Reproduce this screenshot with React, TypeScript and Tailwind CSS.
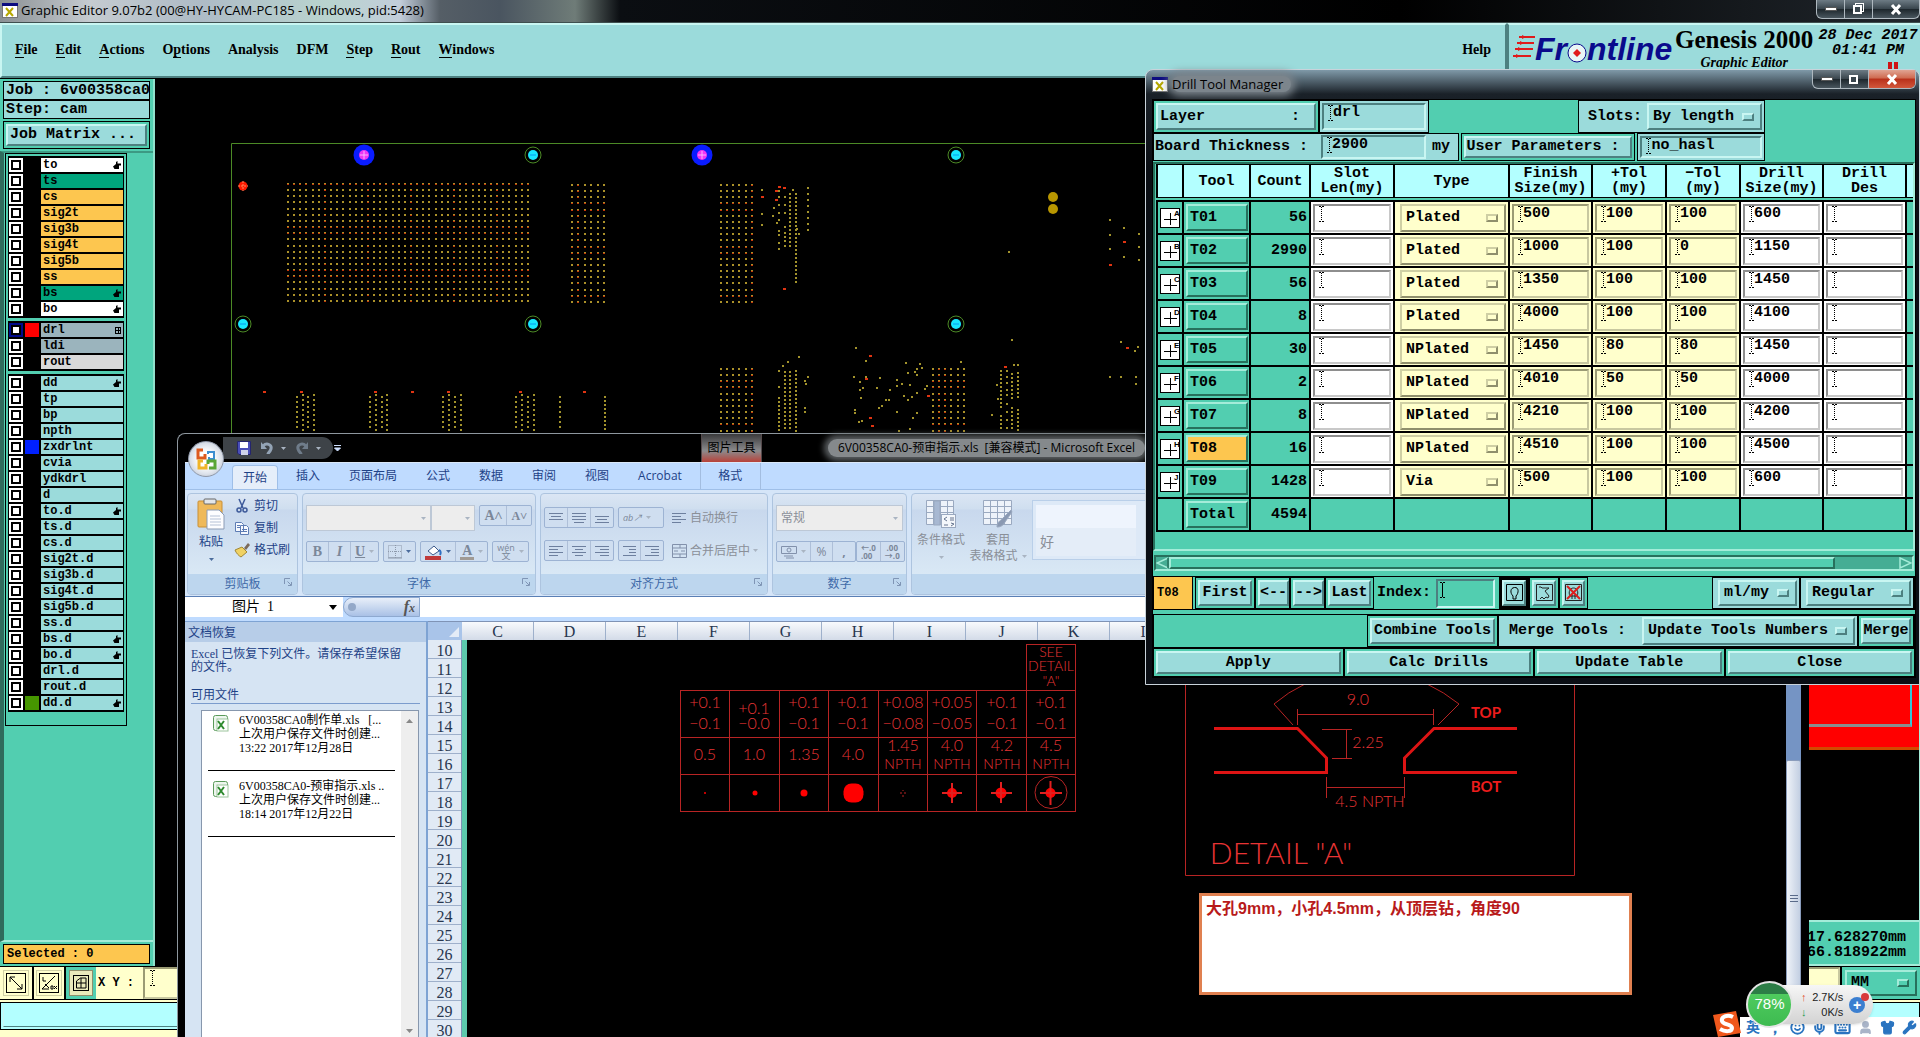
import { Fragment, ReactNode } from "react";
import clsx from "clsx";
import { Keyboard, Mic, Shirt, Smile, User, Wrench } from "lucide-react";

const mono = "font-['Liberation_Mono',monospace] font-bold text-black";
const cjk = "font-['Open_Sans','Noto_Sans_CJK_SC',sans-serif]";
const song = "font-['Liberation_Serif','Noto_Sans_CJK_SC',serif]";

const raised =
  "border-2 border-t-[#c9f6f2] border-l-[#c9f6f2] border-b-[#4d8080] border-r-[#4d8080]";
const sunken =
  "border-2 border-t-[#4d8080] border-l-[#4d8080] border-b-[#c9f6f2] border-r-[#c9f6f2]";
const raisedGreen =
  "border-2 border-t-[#a4ecd9] border-l-[#a4ecd9] border-b-[#27705c] border-r-[#27705c]";
const raisedCream =
  "border-2 border-t-[#cfcfa4] border-l-[#cfcfa4] border-b-[#8f8f6c] border-r-[#8f8f6c]";
const sunkenCream =
  "border-2 border-t-[#9b9b74] border-l-[#9b9b74] border-b-[#c8c8a0] border-r-[#c8c8a0]";
const sunkenWhite =
  "border-2 border-t-[#8e8e8e] border-l-[#8e8e8e] border-b-[#c8c8c8] border-r-[#c8c8c8]";

type Layer = { name: string; bg: string; swatch?: string; hand?: boolean; on?: boolean };

const pale = "bg-[#9bdbdb]";
const amber = "bg-[#fdc64f]";

const layerGroups: Layer[][] = [
  [
    { name: "to", bg: "bg-white", hand: true },
    { name: "ts", bg: "bg-[#00a57d]" },
    { name: "cs", bg: amber },
    { name: "sig2t", bg: amber },
    { name: "sig3b", bg: amber },
    { name: "sig4t", bg: amber },
    { name: "sig5b", bg: amber },
    { name: "ss", bg: amber },
    { name: "bs", bg: "bg-[#00a57d]", hand: true },
    { name: "bo", bg: "bg-white", hand: true },
  ],
  [
    { name: "drl", bg: "bg-[#9bb4bd]", swatch: "bg-[#ff0000]", on: true },
    { name: "ldi", bg: "bg-[#9bb4bd]" },
    { name: "rout", bg: "bg-[#d9d9d9]" },
  ],
  [
    { name: "dd", bg: pale, hand: true },
    { name: "tp", bg: pale },
    { name: "bp", bg: pale },
    { name: "npth", bg: pale },
    { name: "zxdrlnt", bg: pale, swatch: "bg-[#0020ff]" },
    { name: "cvia", bg: pale },
    { name: "ydkdrl", bg: pale },
    { name: "d", bg: pale },
    { name: "to.d", bg: pale, hand: true },
    { name: "ts.d", bg: pale },
    { name: "cs.d", bg: pale },
    { name: "sig2t.d", bg: pale },
    { name: "sig3b.d", bg: pale },
    { name: "sig4t.d", bg: pale },
    { name: "sig5b.d", bg: pale },
    { name: "ss.d", bg: pale },
    { name: "bs.d", bg: pale, hand: true },
    { name: "bo.d", bg: pale, hand: true },
    { name: "drl.d", bg: pale },
    { name: "rout.d", bg: pale },
    { name: "dd.d", bg: pale, swatch: "bg-[#469600]", hand: true },
  ],
];

// tool, count, type, finish size, +tol, -tol, drill size
const tools = [
  ["T01", "56", "Plated", "500", "100", "100", "600"],
  ["T02", "2990", "Plated", "1000", "100", "0", "1150"],
  ["T03", "56", "Plated", "1350", "100", "100", "1450"],
  ["T04", "8", "Plated", "4000", "100", "100", "4100"],
  ["T05", "30", "NPlated", "1450", "80", "80", "1450"],
  ["T06", "2", "NPlated", "4010", "50", "50", "4000"],
  ["T07", "8", "NPlated", "4210", "100", "100", "4200"],
  ["T08", "16", "NPlated", "4510", "100", "100", "4500"],
  ["T09", "1428", "Via", "500", "100", "100", "600"],
];

const menus: [string, number][] = [
  ["File", 0],
  ["Edit", 0],
  ["Actions", 0],
  ["Options", 1],
  ["Analysis", -1],
  ["DFM", -1],
  ["Step", 0],
  ["Rout", 0],
  ["Windows", 0],
];

/* ---------- shared bits ---------- */

const IBeam = ({ solid }: { solid?: boolean }) => (
  <svg width="5" height="16" className="shrink-0" shapeRendering="crispEdges">
    <path d="M0 0.5h2M3 0.5h2M0 15.5h2M3 15.5h2" stroke="#000" />
    <path d="M2.5 1V15" stroke="#000" strokeDasharray={solid ? undefined : "1 1"} />
  </svg>
);

type FieldProps = { label: string; value?: string; bevel: string; className?: string };

const Field = ({ label, value = "", bevel, className }: FieldProps) => (
  <div className={clsx("flex items-start overflow-hidden pl-1", bevel, className)}>
    <IBeam />
    <input
      aria-label={label}
      defaultValue={value}
      className="h-4 w-full min-w-0 bg-transparent text-[15px] leading-4 outline-none"
    />
  </div>
);

type PickerProps = { label: string; value: string; tone: string; mark?: string; className?: string };

const Picker = ({ label, value, tone, mark = raised, className }: PickerProps) => (
  <div className={clsx("relative flex items-center", tone, className)}>
    <select
      aria-label={label}
      className="h-full w-full appearance-none bg-transparent pl-1 text-[15px] leading-4 outline-none"
    >
      <option>{value}</option>
    </select>
    <span className={clsx("pointer-events-none absolute right-[6px] h-2 w-3", mark)} />
  </div>
);

const Button = ({ children, className }: { children: ReactNode; className?: string }) => (
  <button className={clsx("bg-[#9bdbdb] text-[15px] leading-4 whitespace-nowrap", raised, className)}>
    {children}
  </button>
);

const XIcon = () => (
  <svg width="16" height="15" viewBox="0 0 16 15" className="shrink-0">
    <rect x="0.5" y="0.5" width="15" height="14" fill="#fff" stroke="#777" />
    <rect width="16" height="3" fill="#0c0c80" />
    <path d="M4 5l7 8M11 5l-7 8" stroke="#b7a800" strokeWidth="2" />
  </svg>
);

const WindowButtons = ({ active }: { active?: boolean }) => (
  <div className="flex h-[19px] overflow-hidden rounded-b-md border border-t-0 border-[#aeb8bf] bg-[linear-gradient(#6d7b84,#38444c_50%,#1d262c_51%,#49565e)]">
    <button aria-label="Minimize" className="flex w-7 items-center justify-center border-r border-[#aeb8bf]">
      <svg width="12" height="6">
        <rect x="0.5" y="1.5" width="11" height="3" fill="#fff" stroke="#555" />
      </svg>
    </button>
    <button aria-label="Restore" className="flex w-7 items-center justify-center border-r border-[#aeb8bf]">
      <svg width="13" height="12">
        {!active && <rect x="3.5" y="0.5" width="8" height="8" fill="none" stroke="#fff" />}
        <rect x="2" y="3" width="7" height="7" fill="#3a464e" stroke="#fff" strokeWidth="2" />
      </svg>
    </button>
    <button
      aria-label="Close"
      className={clsx(
        "flex w-[46px] items-center justify-center",
        active && "bg-[linear-gradient(#e0a493,#cf6a50_45%,#b8301a_50%,#d2573b)]"
      )}
    >
      <svg width="12" height="11" viewBox="0 0 12 11">
        <path d="M2 1l8 9M10 1l-8 9" stroke="#fff" strokeWidth="3" />
      </svg>
    </button>
  </div>
);

/* ---------- Graphic Editor ---------- */

const Hand = () => (
  <svg width="8" height="8" viewBox="0 0 8 8">
    <path d="M3 1L4.500 0v2.500H8V4.500H6V8H1.500L0 5.500 3 3z" fill="#000" />
  </svg>
);

const LayerRow = ({ layer }: { layer: Layer }) => (
  <div className="flex h-4 gap-[2px] py-px">
    <label className={clsx("flex w-[14px] items-center justify-center", layer.on ? "bg-[#000a8c]" : "bg-white")}>
      <input
        type="checkbox"
        aria-label={layer.name}
        className="size-[10px] appearance-none border-2 border-black bg-white"
      />
    </label>
    <span className={clsx("w-[14px]", layer.swatch ?? "bg-black")} />
    <span className={clsx("flex flex-1 items-center justify-between px-[2px] text-xs leading-3", layer.bg)}>
      {layer.name}
      {layer.hand && <Hand />}
      {layer.on && (
        <svg width="6" height="7" shapeRendering="crispEdges">
          <path d="M0.5 0.5h5v6h-5zM0 3.5h6M3 0v7" fill="none" stroke="#000" />
        </svg>
      )}
    </span>
  </div>
);

const Sidebar = () => (
  <aside className={clsx("flex w-[155px] shrink-0 flex-col border-r-2 border-[#8fe0cb] bg-[#52ceb0]", mono)}>
    <div className="px-[3px] pt-[2px] text-[15px]">
      <div className="h-[19px] overflow-hidden border border-black bg-[#9bdbdb] pl-[2px] leading-[18px] whitespace-pre">
        Job : 6v00358ca0
      </div>
      <div className="h-[19px] border border-black bg-[#9bdbdb] pl-[2px] leading-[18px]">Step: cam</div>
      <div className="mt-[2px] flex h-[28px] border border-black p-[2px]">
        <Button className="flex-1 pl-[2px] text-left">Job Matrix ...</Button>
      </div>
    </div>
    <div className="mt-[2px] flex-1 border-t-2 border-l-4 border-t-[#3c9a83] border-l-[#2f6b5c] border-b-2 border-b-[#a4ecd9]">
      <div className="ml-px w-[122px] border border-black pt-[2px] pb-[10px]">
        {layerGroups.map((group, i) => (
          <div key={i} className="mx-[2px] mb-[3px] border border-black bg-black">
            {group.map((layer) => (
              <LayerRow key={layer.name} layer={layer} />
            ))}
          </div>
        ))}
      </div>
    </div>
    <div className="mx-[3px] my-[2px] h-5 border border-black bg-[#fdc64f] pl-[3px] text-xs leading-[18px]">
      Selected : 0
    </div>
  </aside>
);

type GridProps = { x: number; y: number; cols: number; rows: number; dx?: number; hot?: number[]; hotCols?: number[] };

const HoleGrid = ({ x, y, cols, rows, dx = 6.15, hot = [], hotCols = [] }: GridProps) => (
  <>
    {Array.from({ length: cols * rows }, (_, i) => {
      const c = i % cols;
      const r = Math.floor(i / cols);
      const red = hot.includes(r) || hotCols.includes(c);
      const px = Math.round(x + c * dx);
      const py = Math.round(y + r * 6.15);
      return (
        <Fragment key={i}>
          <rect x={px} y={py} width="2" height="2" fill="#ab9129" />
          {red && <rect x={px} y={py + 1} width="2" height="1" fill="#c4380a" />}
        </Fragment>
      );
    })}
  </>
);

// vertical runs of vias: x, first y, last y, step
const runs = [
  [808, 188, 230, 6], [790, 194, 246, 4], [796, 194, 283, 4],
  [785, 372, 430, 4], [790, 372, 430, 4], [796, 371, 431, 4], [779, 398, 430, 4],
  [1001, 371, 408, 4], [1001, 416, 430, 4], [1012, 374, 400, 4], [1012, 408, 430, 4],
  [1018, 373, 400, 4], [1018, 410, 431, 4],
  [297, 397, 431, 5], [303, 395, 431, 5], [308, 397, 431, 5], [314, 395, 431, 5],
  [370, 397, 431, 5], [376, 395, 431, 5], [382, 397, 431, 5], [387, 395, 431, 5],
  [443, 397, 431, 5], [449, 395, 431, 5], [455, 397, 431, 5], [461, 395, 431, 5],
  [516, 397, 431, 5], [522, 395, 431, 5], [528, 397, 431, 5], [534, 395, 431, 5],
  [560, 397, 431, 5], [605, 397, 431, 4],
];

const vias = [
  [762, 190], [762, 214], [762, 225], [793, 190], [774, 208], [773, 216], [777, 223],
  [779, 191], [779, 197], [779, 205], [779, 213], [779, 220], [779, 231], [779, 235], [779, 243], [779, 249],
  [785, 197], [785, 205], [785, 213], [785, 227], [785, 233], [785, 237], [785, 241], [785, 246],
  [797, 229], [799, 234], [1009, 252], [1110, 220], [1110, 235], [1110, 249], [1124, 228], [1124, 257],
  [1139, 234], [1139, 247], [1139, 260], [856, 348], [866, 361], [799, 357], [788, 362], [783, 366],
  [779, 371], [779, 387], [808, 377], [805, 381], [806, 384], [805, 408], [805, 412],
  [906, 363], [920, 364], [922, 368], [917, 369], [915, 372], [908, 373], [917, 375], [854, 377],
  [866, 377], [880, 378], [897, 380], [860, 382], [902, 384], [910, 385], [897, 386], [927, 386],
  [925, 389], [863, 388], [877, 388], [860, 390], [890, 390], [917, 393], [904, 396], [912, 397],
  [861, 398], [908, 400], [886, 400], [889, 400], [882, 406], [879, 408], [855, 410], [855, 413],
  [917, 413], [897, 412], [913, 418], [862, 421], [859, 422], [910, 429], [899, 431], [961, 362],
  [1012, 340], [1014, 365], [1018, 365], [1007, 371], [1007, 377], [1007, 383], [1007, 390],
  [1007, 395], [1007, 404], [1007, 412], [1007, 420], [1007, 428], [997, 385], [998, 399], [992, 415],
  [1121, 342], [1138, 347], [1135, 351], [1110, 377], [1121, 377], [1136, 377], [1136, 384],
];

const hotVias = [
  [762, 197], [779, 187], [784, 188], [776, 191], [776, 200], [784, 289], [1110, 265], [1124, 242],
  [870, 356], [866, 379], [928, 396], [870, 418], [872, 426], [1005, 367], [1127, 348],
  [264, 392], [301, 392], [375, 392], [412, 392], [448, 392], [520, 392], [584, 392],
];

const Board = () => (
  <svg className="absolute inset-0 h-full w-full" aria-label="Board view">
    {/* everything below is in screen units, the group brings it under the menu bar */}
    <g transform="translate(-155 -79)">
      <path d="M231.5 966V143.5H1200" fill="none" stroke="#4c8a26" />
      <g shapeRendering="crispEdges">
        <HoleGrid x={287} y={183} cols={40} rows={20} hot={[0, 7, 8, 14, 15]} hotCols={[6, 13, 20, 27, 34]} />
        <HoleGrid x={571} y={184} cols={6} rows={20} hot={[3, 4, 10, 11, 18]} hotCols={[1]} dx={6.4} />
        <HoleGrid x={720} y={184} cols={6} rows={20} hot={[3, 4, 10, 11, 18]} hotCols={[5]} />
        <HoleGrid x={720} y={368} cols={6} rows={11} hot={[2, 3, 9]} hotCols={[5]} />
        <HoleGrid x={932} y={368} cols={6} rows={11} hot={[2, 3, 9]} hotCols={[1, 2]} />
        {runs.map(([x, from, to, step]) =>
          Array.from({ length: Math.floor((to - from) / step) + 1 }, (_, i) => (
            <rect key={`${x}-${from}-${i}`} x={x - 1} y={from + i * step - 1} width="2" height="2" fill="#a3932c" />
          ))
        )}
        {vias.map(([x, y]) => (
          <rect key={`${x}-${y}`} x={x - 1} y={y - 1} width="2" height="2" fill="#a3932c" />
        ))}
        {hotVias.map(([x, y]) => (
          <rect key={`${x}-${y}`} x={x - 1} y={y - 1} width="3" height="2" fill="#e03412" />
        ))}
      </g>
      {[364, 702].map((x) => (
        <g key={x}>
          <circle cx={x} cy="155" r="10.5" fill="#0a1cff" />
          <circle cx={x} cy="155" r="5" fill="#ee35f5" />
          <path d={`M${x - 4} 155h8M${x} 151v8`} stroke="#fbb0ff" />
        </g>
      ))}
      {[[533, 155], [956, 155], [243, 324], [533, 324], [956, 324]].map(([x, y]) => (
        <g key={`${x}-${y}`}>
          <circle cx={x} cy={y} r="8" fill="none" stroke="#4c8a26" />
          <circle cx={x} cy={y} r="5" fill="#19e6ff" />
          <path d={`M${x - 3} ${y}h6`} stroke="#0a9af0" />
        </g>
      ))}
      <circle cx="243" cy="186" r="4.5" fill="#ff1a00" />
      <path d="M238 186h10M243 181v10" stroke="#ff8b5e" strokeDasharray="2 1" />
      <circle cx="1053" cy="197" r="5" fill="#b89600" />
      <circle cx="1053" cy="209" r="5" fill="#b89600" />
    </g>
  </svg>
);

const Brand = () => (
  <div className="flex w-[413px] shrink-0 border-2 border-t-[#c9f6f2] border-l-[#4d8080] border-r-0 border-b-[#4d8080] bg-[#9bdbdb] pt-[3px]">
    <div className="flex h-[42px] items-center pl-1">
      <svg width="22" height="26" viewBox="0 0 22 26" className="mb-1">
        <path d="M6 3h16M4 9h17M2 15h18M0 22h18" stroke="#e01b1b" strokeWidth="2" />
        <path d="M9 1l4 2-4 2zM7 7l4 2-4 2zM5 13l4 2-4 2zM3 20l4 2-4 2z" fill="#e01b1b" />
      </svg>
      <span className="flex items-center font-['Liberation_Sans',sans-serif] text-[32px] leading-8 font-bold text-[#0a0a8c] italic">
        Fr
        <svg width="20" height="20" viewBox="0 0 20 20" className="mt-2">
          <circle cx="10" cy="10" r="9" fill="#e9f6f6" stroke="#0a0a8c" />
          <path d="M10 6l4 4-4 4-4-4z" fill="#e01b1b" />
        </svg>
        ntline
      </span>
    </div>
    <div className="flex-1 text-center font-['Liberation_Serif',serif] whitespace-nowrap">
      <div className="text-[25px] leading-6 font-bold">Genesis 2000</div>
      <div className="mt-[3px] text-sm leading-4 font-bold italic">Graphic Editor</div>
    </div>
    <div className="w-[104px] text-center font-['Liberation_Mono',monospace] text-[15px] leading-[15px] font-bold whitespace-nowrap italic">
      28 Dec 2017
      <br />
      01:41 PM
      <div className="ml-[72px] flex gap-[2px] pt-1">
        <span className="h-3 w-1 bg-[#d01414]" />
        <span className="h-3 w-1 bg-[#d01414]" />
      </div>
    </div>
  </div>
);

const GraphicEditor = () => (
  <section className="flex h-full flex-col">
    <header className="flex h-[22px] items-start justify-between bg-[linear-gradient(90deg,#8b9094_0,#c5cbd0_90px,#aebbc6_200px,#b9d4cf_330px,#c2cdda_400px,#555e66_440px,#4a5560_500px,#6f7c78_575px,#0b0e12_620px,#000_1400px,#20262c_100%)] pl-[2px]">
      <h1 className={clsx("flex items-center gap-[3px] pt-[2px] text-[13px] leading-4 whitespace-nowrap", cjk)}>
        <XIcon />
        Graphic Editor 9.07b2 (00@HY-HYCAM-PC185 - Windows, pid:5428)
      </h1>
      <WindowButtons />
    </header>
    <div className="flex h-[57px] shrink-0 border-t border-b border-t-[#3f4f4f] border-b-black bg-[#9bdbdb]">
      <nav
        className={clsx(
          "flex flex-1 items-center gap-[18px] pb-[2px] pl-[13px] font-['Liberation_Serif',serif] text-sm font-bold",
          raised
        )}
      >
        {menus.map(([name, hot]) => (
          <button key={name}>
            {name.split("").map((ch, i) => (
              <span key={i} className={clsx(i === hot && "border-b border-black")}>
                {ch}
              </span>
            ))}
          </button>
        ))}
        <button className="mr-[14px] ml-auto">Help</button>
      </nav>
      <Brand />
    </div>
    <div className="flex min-h-0 flex-1">
      <Sidebar />
      <main className="relative flex-1 bg-black">
        <Board />
      </main>
      <aside className={clsx("flex w-[130px] flex-col justify-end border-r border-[#a4ecd9] bg-black text-[15px]", mono)}>
        <div className="mb-[170px] h-[120px] border-b-[3px] border-[#d24a00] bg-[#ff0000]">
          <div className="mr-[7px] h-[97px] border-r-2 border-b-[3px] border-r-[#35c8d8] border-b-[#8a8f8f]" />
        </div>
        <div className="h-[46px] border-t-2 border-b-2 border-[#a4ecd9] bg-[#52ceb0] pt-2 pr-[13px] text-right leading-[15px]">
          <div>17.628270mm</div>
          <div>66.818922mm</div>
        </div>
      </aside>
    </div>
    <footer className={clsx("flex h-[71px] shrink-0 flex-col bg-[#ffffcc]", mono)}>
      <div className="flex h-[34px] border-b border-t border-black text-sm">
        <button aria-label="Zoom" className="flex w-[34px] items-center justify-center border-r-2 border-black">
          <svg width="26" height="26" fill="none" stroke="#000">
            <rect x="0.5" y="0.5" width="25" height="25" stroke="#cfcfa4" />
            <rect x="3.5" y="3.5" width="19" height="19" />
            <path d="M7 7l12 12M7 12V7h5M19 14v5h-5" />
          </svg>
        </button>
        <button aria-label="Angle" className="flex w-8 items-center justify-center border-r-2 border-black">
          <svg width="26" height="26" fill="none" stroke="#000">
            <rect x="0.5" y="0.5" width="25" height="25" stroke="#cfcfa4" />
            <rect x="3.5" y="3.5" width="19" height="19" />
            <path d="M19 6L6 19h7M7 7v4h3M15 16h2v3h-2zM18 16l3 3M21 16l-3 3M9 14l4 4" />
          </svg>
        </button>
        <button aria-label="Grid" className="flex w-[29px] items-center justify-center bg-[#52ceb0]">
          <svg width="24" height="26" fill="none" stroke="#000">
            <rect width="24" height="26" fill="#e9e9bb" stroke="#8f8f6c" strokeWidth="2" />
            <rect x="4.5" y="5.5" width="15" height="15" />
            <path d="M7.5 18V11l4-3h5.500v10zM12 8v10M7 13h10" />
          </svg>
        </button>
        <label className="flex flex-1 items-center gap-[9px] border-l border-[#52ceb0] pl-[2px] text-xs">
          <span className="whitespace-pre">X Y :</span>
          <span className={clsx("flex h-full flex-1 items-start pt-px pl-[5px]", sunkenCream)}>
            <IBeam />
            <input className="w-full bg-transparent outline-none" />
          </span>
        </label>
        <div className="flex w-[80px] border-l-2 border-black bg-[#52ceb0] p-[3px]">
          <Picker label="Units" value="MM" tone={raisedGreen} mark={raisedGreen} className="flex-1" />
        </div>
      </div>
      <div className="mt-[2px] h-[28px] border border-black bg-[#b3ffff] p-[2px]">
        <div className="h-full border-b border-l border-b-[#4d8080] border-l-[#c9f6f2]" />
      </div>
    </footer>
  </section>
);

/* ---------- Excel ---------- */

const Caret = ({ dim }: { dim?: boolean }) => (
  <svg width="5" height="3" className="shrink-0">
    <path d="M0 0h5L2.500 3z" fill={dim ? "#a9b4c2" : "#4a6b9c"} />
  </svg>
);

const Lines = ({ rows }: { rows: [number, number][] }) => (
  <svg width="14" height="12" stroke="#6d7f9e" strokeWidth="1">
    {rows.map(([a, b], i) => (
      <path key={i} d={`M${a} ${i * 3 + 1.5}H${b}`} />
    ))}
  </svg>
);

const Cluster = ({ items }: { items: ReactNode[] }) => (
  <div className="flex h-[21px] divide-x divide-[#aebfd8] rounded-xs border border-[#9db3d3] bg-[#cfdef0] text-[#7b8799]">
    {items.map((item, i) => (
      <button key={i} className="flex min-w-[22px] items-center justify-center gap-1 px-1">
        {item}
      </button>
    ))}
  </div>
);

type GroupProps = { title?: string; className: string; children: ReactNode };

const Group = ({ title, className, children }: GroupProps) => (
  <div
    className={clsx(
      "flex h-[102px] shrink-0 flex-col overflow-hidden rounded-sm border border-[#adc4df] bg-[linear-gradient(#dbe6f4_0,#cfdeef_15px,#c8d8ed_16px,#d9e8f5_80px)]",
      className
    )}
  >
    <div className="flex-1">{children}</div>
    <div className="relative h-5 bg-[#bdd6ee] text-center text-[#3f6aa8] leading-5">
      {title}
      {title && (
        <svg width="8" height="8" className="absolute top-1 right-[5px]" fill="none" stroke="#7f95b5">
          <path d="M0.500 6V0.500H6M3.500 3.500L7 7M7.500 4v3.500H4" />
        </svg>
      )}
    </div>
  </div>
);

const tabs = ["插入", "页面布局", "公式", "数据", "审阅", "视图", "Acrobat"];

const Ribbon = () => (
  <div className="flex h-[107px] shrink-0 gap-[4px] overflow-hidden border-t border-[#9fbfe8] bg-[#d5e5f8] px-[2px] pt-[3px] text-xs text-[#1e4287]">
    <Group title="剪贴板" className="w-[111px]">
      <div className="flex">
        <button className="flex w-[46px] flex-col items-center pt-1 leading-4">
          <svg width="28" height="32" viewBox="0 0 28 32">
            <rect x="1" y="3" width="24" height="26" rx="1" fill="#efb95a" stroke="#c98f35" />
            <rect x="7" y="1" width="12" height="5" rx="1" fill="#e3e6ea" stroke="#666" />
            <path d="M10 12h12l5 5v14H10z" fill="#fdfdff" stroke="#8b9bb5" />
            <path d="M13 18h10M13 21h11M13 24h11M13 27h11" stroke="#b5c1d6" />
          </svg>
          <span className="pt-1 pb-2">粘贴</span>
          <Caret />
        </button>
        <div className="pt-px leading-[22px]">
          <button className="flex items-center gap-1">
            <svg width="16" height="16" viewBox="0 0 16 16" fill="none" stroke="#3d5a9a" strokeWidth="1.500">
              <path d="M5 1l4 9M11 1L7 10" />
              <circle cx="5" cy="12" r="2" />
              <circle cx="11" cy="12" r="2" />
            </svg>
            剪切
          </button>
          <button className="flex items-center gap-1">
            <svg width="16" height="16" viewBox="0 0 16 16" fill="#f6f9ff" stroke="#5d7cb4">
              <path d="M1.500 2.500h6l2 2v7h-8zM6.500 5.500h6l2 2v7h-8z" />
              <path d="M8 9.500h5M8 11.500h5M3 5.500h3M3 7.500h3" />
            </svg>
            复制
          </button>
          <button className="flex items-center gap-1">
            <svg width="16" height="16" viewBox="0 0 16 16">
              <path d="M10 6l4-5 2 2-4 5z" fill="#7b6a5a" />
              <path d="M1 8l7-3 5 5-6 5c-2-1-5-4-6-7z" fill="#f0d264" stroke="#a18735" />
            </svg>
            格式刷
          </button>
        </div>
      </div>
    </Group>
    <Group title="字体" className="w-[234px]">
      <div className="flex flex-col gap-[10px] px-[3px] pt-[11px]">
        <div className="flex">
          <div className="flex h-[26px] w-[131px] items-center justify-end border border-[#bdc8d6] bg-[#ededed] pr-1">
            <Caret dim />
          </div>
          <div className="mr-1 flex h-[26px] w-[47px] items-center justify-end border border-[#bdc8d6] bg-[#ededed] pr-1">
            <Caret dim />
          </div>
          <Cluster
            items={[
              <b className="font-['Liberation_Serif',serif] text-sm">A˄</b>,
              <b className="font-['Liberation_Serif',serif] text-xs">A˅</b>,
            ]}
          />
        </div>
        <div className="flex gap-1">
          <Cluster
            items={[
              <b className="font-['Liberation_Serif',serif] text-sm">B</b>,
              <i className="font-['Liberation_Serif',serif] text-sm font-bold">I</i>,
              <>
                <u className="font-['Liberation_Serif',serif] text-sm font-bold">U</u>
                <Caret dim />
              </>,
            ]}
          />
          <Cluster
            items={[
              <>
                <svg width="14" height="14" fill="none" stroke="#8d99ab" strokeDasharray="1 1">
                  <path d="M0.500 0.500h13v12H0.500zM7.500 0v13M0 6.500h14" />
                  <path d="M0 13h14" strokeDasharray="none" />
                </svg>
                <Caret />
              </>,
            ]}
          />
          <Cluster
            items={[
              <>
                <svg width="17" height="16" viewBox="0 0 17 16">
                  <path d="M3 7l6-5 5 5-6 4z" fill="#fff" stroke="#3d5a8a" />
                  <path d="M14 6c2 1 2 3 1 5" stroke="#2e6fc2" strokeWidth="2" fill="none" />
                  <rect y="12" width="16" height="4" fill="#c0393a" />
                </svg>
                <Caret />
              </>,
              <>
                <b className="border-b-[3px] border-[#a09a94] px-[2px] font-['Liberation_Serif',serif] text-sm leading-[13px]">A</b>
                <Caret dim />
              </>,
            ]}
          />
          <Cluster
            items={[
              <>
                <span className="text-[9px] leading-[8px]">
                  wén
                  <br />文
                </span>
                <Caret dim />
              </>,
            ]}
          />
        </div>
      </div>
    </Group>
    <Group title="对齐方式" className="w-[228px]">
      <div className="flex flex-col gap-[12px] px-[3px] pt-[13px] text-[#8a8f98]">
        <div className="flex">
          <Cluster
            items={[
              <Lines rows={[[0, 14], [2, 12], [0, 14]]} />,
              <Lines rows={[[0, 14], [0, 14], [0, 14], [2, 12]]} />,
              <Lines rows={[[9, 9], [0, 14], [2, 12], [0, 14]]} />,
            ]}
          />
          <div className="ml-1 w-[46px]">
            <Cluster
              items={[
                <>
                  <i className="text-[9px]">ab↗</i>
                  <Caret dim />
                </>,
              ]}
            />
          </div>
          <button className="ml-2 flex items-center gap-1 whitespace-nowrap">
            <Lines rows={[[0, 14], [0, 9], [0, 14], [0, 9]]} />
            自动换行
          </button>
        </div>
        <div className="flex">
          <Cluster
            items={[
              <Lines rows={[[0, 14], [0, 9], [0, 14], [0, 9]]} />,
              <Lines rows={[[0, 14], [3, 11], [0, 14], [3, 11]]} />,
              <Lines rows={[[0, 14], [5, 14], [0, 14], [5, 14]]} />,
            ]}
          />
          <div className="ml-1 w-[46px]">
            <Cluster
              items={[
                <Lines rows={[[0, 14], [6, 14], [6, 14], [0, 14]]} />,
                <Lines rows={[[0, 14], [6, 14], [6, 14], [0, 14]]} />,
              ]}
            />
          </div>
          <button className="ml-2 flex items-center gap-[3px] whitespace-nowrap">
            <svg width="15" height="14" fill="none" stroke="#8291ab">
              <path d="M0.500 0.500h14v13h-14zM0 4h15M0 10h15M8 0v4M8 10v4M2 7h4M9 7h4" />
            </svg>
            合并后居中
            <Caret dim />
          </button>
        </div>
      </div>
    </Group>
    <Group title="数字" className="w-[135px]">
      <div className="flex flex-col gap-[10px] px-[3px] pt-[11px]">
        <div className="flex h-[26px] items-center justify-between border border-[#bdc8d6] bg-[#ededed] px-1 text-[#8a8f98]">
          常规
          <Caret dim />
        </div>
        <div className="flex justify-between">
          <Cluster
            items={[
              <>
                <svg width="16" height="14" fill="none" stroke="#8291ab">
                  <path d="M0.500 1.500h15v7h-15zM3 11h9M5 13h8" />
                  <circle cx="8" cy="5" r="2" />
                </svg>
                <Caret dim />
              </>,
              "%",
              <b>,</b>,
            ]}
          />
          <Cluster
            items={[
              <span className="text-left text-[8px] leading-[8px] font-bold">
                ←.0
                <br />
                .00
              </span>,
              <span className="text-[8px] leading-[8px] font-bold">
                .00
                <br />
                →.0
              </span>,
            ]}
          />
        </div>
      </div>
    </Group>
    <Group className="w-[860px]">
      <div className="flex pt-[6px] text-center text-[#8a8f98]">
        <button className="flex w-[58px] flex-col items-center leading-4">
          <svg width="30" height="28" fill="#eef3fa" stroke="#9aa9c0">
            <path d="M0.500 0.500h27v24h-27zM7.500 0v25M14.500 0v25M21.500 0v25M0 6.500h28M0 12.500h28M0 18.500h28" />
            <rect x="8" y="1" width="6" height="24" fill="#a7b8d2" />
            <rect x="15.500" y="14.500" width="14" height="13" fill="#f4f7fb" />
            <path d="M21 17l-3 2 3 2M24 18h4M24 20h4M18 25h4M25 23l3 1-3 2" fill="none" stroke="#66758f" />
          </svg>
          <span className="pt-1 pb-2">条件格式</span>
          <Caret dim />
        </button>
        <button className="flex w-[56px] flex-col items-center leading-4">
          <svg width="30" height="28" fill="#eef3fa" stroke="#9aa9c0">
            <path d="M0.500 0.500h28v24h-28zM7.500 0v25M14.500 0v25M21.500 0v25M0 6.500h28M0 12.500h28M0 18.500h28" />
            <path d="M14 27c0-5 3-6 5-8l9-9 1 2-7 10c-2 4-5 5-8 5z" fill="#8a99b2" />
          </svg>
          <span className="pt-1">套用</span>
          <span className="flex items-center gap-1 whitespace-nowrap">
            表格格式
            <Caret dim />
          </span>
        </button>
        <div className="ml-[6px] h-[60px] flex-1 border border-[#b9cfe9] bg-[#dde9f7] pt-1 pl-[3px] text-left text-sm">
          <div className="h-[23px] w-[100px] bg-[#eef4fd]" />
          <div className="w-[100px] bg-[#e4edf8] pl-1 leading-7">好</div>
        </div>
      </div>
    </Group>
  </div>
);

const recovered = [
  ["6V00358CA0制作单.xls   [...", "上次用户保存文件时创建...", "13:22 2017年12月28日"],
  ["6V00358CA0-预审指示.xls ..", "上次用户保存文件时创建...", "18:14 2017年12月22日"],
];

const RecoveryPane = () => (
  <aside className={clsx("flex w-[243px] shrink-0 flex-col border-r-2 border-[#7ea3d3] bg-[#d6e4f3] text-xs text-[#1e4287]", song)}>
    <h2 className="h-[21px] border-t border-[#7ea3d3] bg-[#b7cde8] pl-[3px] leading-[22px]">文档恢复</h2>
    <p className="pt-[6px] pr-5 pl-[6px] leading-[13px]">Excel 已恢复下列文件。请保存希望保留的文件。</p>
    <h3 className="mx-[6px] mt-[14px] border-b border-[#7c9ccd] leading-[15px]">可用文件</h3>
    <div className="mt-[6px] mr-[7px] ml-[16px] flex min-h-0 flex-1 border border-b-0 border-[#8797ad] bg-white text-black">
      <ul className="min-w-0 flex-1 pr-[6px] pl-[6px]">
        {recovered.map(([name, note, time]) => (
          <li key={name} className="mb-[6px] flex h-[60px] gap-[10px] border-b border-black pt-[2px] pl-[5px] whitespace-pre">
            <svg width="16" height="17" viewBox="0 0 16 17" className="mt-[2px] shrink-0">
              <rect x="0.500" y="0.500" width="14" height="15" rx="2" fill="#eef6ee" stroke="#5a9a5a" />
              <rect x="4" y="4" width="11" height="12" fill="#fff" stroke="#9cc49c" />
              <path d="M5 6l6 8M11 6l-6 8" stroke="#2f8a2f" strokeWidth="2" />
            </svg>
            <div className="leading-[14px]">
              <div>{name}</div>
              <div>{note}</div>
              <div>{time}</div>
            </div>
          </li>
        ))}
      </ul>
      <div className="flex w-[17px] flex-col items-center justify-between bg-[#eee] pt-2 pb-1">
        <svg width="7" height="4"><path d="M0 4h7L3.500 0z" fill="#888" /></svg>
        <svg width="7" height="4"><path d="M0 0h7L3.500 4z" fill="#888" /></svg>
      </div>
    </div>
  </aside>
);

const holeCells = [
  [705, "+0.1", "−0.1", "0.5"],
  [754, "+0.1", "−0.0", "1.0"],
  [804, "+0.1", "−0.1", "1.35"],
  [853, "+0.1", "−0.1", "4.0"],
  [903, "+0.08", "−0.08", "1.45"],
  [952, "+0.05", "−0.05", "4.0"],
  [1002, "+0.1", "−0.1", "4.2"],
  [1051, "+0.1", "−0.1", "4.5"],
] as const;

const Drawing = () => (
  <svg className="absolute inset-0 h-full w-full" aria-label="Drill drawing">
    <g
      transform="translate(-467 -640)"
      fill="none"
      stroke="#b82424"
      className="font-['Lato',sans-serif] font-light"
    >
      <path
        shapeRendering="crispEdges"
        d="M680.500 690.500H1075.500V811.500H680.500zM680 737.500h395M680 774.500h395M729.500 690v121M779.500 690v121M828.500 690v121M878.500 690v121M927.500 690v121M976.500 690v121M1026.500 644.500V811M1026 644.500h49.500V691"
      />
      <g fill="#e83434" stroke="none" textAnchor="middle" fontSize="16">
        <text x="1051" y="657" fontSize="14">SEE</text>
        <text x="1051" y="671" fontSize="14">DETAIL</text>
        <text x="1051" y="686" fontSize="14">"A"</text>
        {holeCells.map(([x, plus, minus, size], i) => (
          <Fragment key={x}>
            <text x={x} y={i === 1 ? 714 : 708}>{plus}</text>
            <text x={x} y="729">{minus}</text>
            <text x={x} y={i < 4 ? 760 : 751}>{size}</text>
            {i > 3 && <text x={x} y="769" fontSize="14">NPTH</text>}
          </Fragment>
        ))}
        <text x="1358" y="705">9.0</text>
        <text x="1368" y="748">2.25</text>
        <text x="1370" y="807">4.5 NPTH</text>
        <text x="1281" y="864" fontSize="30">DETAIL "A"</text>
        <g fill="#ee1c1c" className="font-bold">
          <text x="1486" y="718" fontSize="15">TOP</text>
          <text x="1486" y="792" fontSize="15">BOT</text>
        </g>
      </g>
      <g fill="#ff0000" stroke="none">
        <circle cx="705" cy="793" r="1" />
        <circle cx="755" cy="793" r="2.500" />
        <circle cx="804" cy="793" r="3.500" />
        <rect x="843.500" y="783.500" width="20" height="19" rx="8" />
        <circle cx="952" cy="793" r="5" />
        <circle cx="1001" cy="793" r="5.500" />
        <circle cx="1050.500" cy="793" r="5" />
      </g>
      <path d="M900 793h2M904 793h2M903 790v1M903 795v2" />
      <path d="M942 793h20M952 783v20M991 793h21M1001 782v21M1040 793h22M1050.500 781v24" stroke="#e02020" strokeWidth="2" />
      <circle cx="1051" cy="792.500" r="16" />
      <path d="M1185.500 640V875.500H1574.500V640" />
      <path d="M1293 725L1274 704Q1288 692 1305 684M1438 725L1459 704Q1444 692 1427 684" />
      <path d="M1297.500 709v16M1433.500 709v16M1298 714.500h136M1322 729.500h30M1332 758.500h20M1346.500 730v28M1326.500 777v21M1404.500 777v21M1327 787.500h77" />
      <path
        d="M1214 728.500h83.500L1326.500 758v14.500H1214M1517 728.500h-83L1404.500 758v14.500H1517"
        stroke="#dd1414"
        strokeWidth="3"
      />
    </g>
  </svg>
);

const Excel = () => (
  <section
    className={clsx(
      "absolute top-[433px] right-[111px] bottom-0 left-[177px] flex flex-col rounded-t-lg border-t border-l border-[#8e979e] bg-black pr-[8px] pl-[7px]",
      cjk
    )}
  >
    <header className="flex h-[28px] shrink-0 items-center text-xs">
      <div className="ml-[38px] flex h-[22px] items-center gap-[6px] rounded-r-full bg-[#3e4348] pr-3 pl-[14px]">
        <button aria-label="Save">
          <svg width="14" height="14">
            <path d="M0.500 0.500h13v13H2L0.500 12z" fill="#4a4fb8" stroke="#24256e" />
            <rect x="3" y="1" width="8" height="6" fill="#fff" />
            <rect x="4" y="9" width="7" height="5" fill="#cfd3ea" />
          </svg>
        </button>
        <button aria-label="Undo" className="flex items-center gap-2 pl-1">
          <svg width="12" height="14" fill="none" stroke="#93a3b5" strokeWidth="3">
            <path d="M2 5C6 1 11 4 10 8c-1 3-3 4-3 5" />
            <path d="M0 1v7h6z" fill="#93a3b5" stroke="none" />
          </svg>
          <Caret dim />
        </button>
        <button aria-label="Redo" className="flex items-center gap-2 pl-1">
          <svg width="12" height="14" fill="none" stroke="#6f7c8a" strokeWidth="3">
            <path d="M10 5C6 1 1 4 2 8c1 3 3 4 3 5" />
            <path d="M12 1v7H6z" fill="#6f7c8a" stroke="none" />
          </svg>
          <Caret dim />
        </button>
      </div>
      <svg width="7" height="8" className="ml-[1px]">
        <path d="M0 1.500h7M0.500 4h6L3.500 7z" stroke="#cfe0ff" fill="#cfe0ff" />
      </svg>
      <div className="ml-[360px] h-full w-[61px] border-x border-[#54494b] bg-[linear-gradient(#3a3a3c,#8b8b8d_60%,#b8423a)] text-center leading-[27px]">
        图片工具
      </div>
      <h2 className="ml-[66px] rounded-full bg-[#85898c] px-[10px] leading-[18px] whitespace-pre shadow-[0_0_6px_4px_#5c6063]">
        6V00358CA0-预审指示.xls  [兼容模式] - Microsoft Excel
      </h2>
    </header>
    <button
      aria-label="Office"
      className="absolute top-[7px] left-[10px] flex size-9 items-center justify-center rounded-full border border-[#8f98a8] bg-[radial-gradient(#fff_30%,#dfe4ec_60%,#a9b2c2)]"
    >
      <svg width="24" height="24" viewBox="0 0 24 24" fill="none" strokeWidth="3">
        <path d="M9 3H4v8h7V7" stroke="#dd5a1e" />
        <path d="M14 7V5h6v7h-5v-2" stroke="#3c8ed0" strokeWidth="2" />
        <path d="M9 14H5v7h7v-4" stroke="#f0b428" />
        <path d="M14 17v-3h7v7h-6" stroke="#5aa636" />
      </svg>
    </button>
    <nav className="flex h-[27px] shrink-0 items-stretch border-t border-[#dbe8f8] bg-[#bfdbff] text-xs text-[#1e4287]">
      <button className="mt-[2px] ml-[47px] w-[46px] rounded-t-sm border border-b-0 border-[#9fbfe8] bg-[#e5eefa]">开始</button>
      <div className="ml-[18px] flex gap-[29px]">
        {tabs.map((tab) => (
          <button key={tab}>{tab}</button>
        ))}
      </div>
      <button className="ml-[18px] w-[61px] border-x border-[#a3bde0]">格式</button>
    </nav>
    <Ribbon />
    <div className="flex h-[25px] shrink-0 items-center border-t border-[#5a7fb5] bg-[#bfdbff] pb-1">
      <div className={clsx("flex h-5 w-[158px] items-center justify-end gap-[55px] bg-white pr-[6px] text-sm", song)}>
        <span>图片&nbsp; 1</span>
        <svg width="8" height="5"><path d="M0 0h8L4 5z" fill="#000" /></svg>
      </div>
      <div className="flex h-5 w-[77px] items-center justify-between rounded-l-full border border-[#8ea9d0] bg-[linear-gradient(#e8eff9,#a9c1e6)] pr-1 pl-1">
        <span className="size-2 rounded-full bg-[#93a8c8]" />
        <i className="font-['Liberation_Serif',serif] text-base leading-4 font-bold text-[#555]">
          f<span className="text-xs">x</span>
        </i>
      </div>
      <input aria-label="Formula" className="h-5 flex-1 bg-white outline-none" />
    </div>
    <div className="flex min-h-0 flex-1">
      <RecoveryPane />
      <div className="flex min-w-0 flex-1 flex-col">
        <div className={clsx("flex h-[19px] shrink-0 overflow-hidden border-t border-[#7f93b5] bg-[linear-gradient(#f8fafd,#d3dbe8)] text-base leading-5 text-[#27364f]", song)}>
          <span className="flex w-[34px] shrink-0 items-end justify-end bg-[#a9c4e9] p-[3px]">
            <svg width="10" height="10"><path d="M10 0v10H0z" fill="#e4ecf7" /></svg>
          </span>
          {"CDEFGHIJKL".split("").map((col) => (
            <span key={col} className="w-[72px] shrink-0 border-r border-[#9eb0cb] text-center">
              {col}
            </span>
          ))}
        </div>
        <div className="flex min-h-0 flex-1">
          <div className={clsx("w-[33px] shrink-0 overflow-hidden bg-[#e1eaf5] text-center text-base text-[#27364f]", song)}>
            {Array.from({ length: 21 }, (_, i) => (
              <div key={i} className="h-[19px] border-b border-[#9eb0cb] leading-[21px]">
                {i + 10}
              </div>
            ))}
          </div>
          <div className="w-[6px] shrink-0 border-l border-[#7f93b5] bg-[#5cc9ac]" />
          <div className="relative flex-1 bg-black">
            <Drawing />
            <div className="absolute top-[253px] left-[732px] h-[102px] w-[433px] border-[3px] border-[#e08050] bg-white px-1 pt-[3px] font-['Liberation_Sans','Noto_Sans_CJK_SC',sans-serif] text-base leading-5 font-bold whitespace-nowrap text-[#b81a1a]">
              大孔9mm，小孔4.5mm，从顶层钻，角度90
            </div>
          </div>
          <div className="flex w-[15px] shrink-0 flex-col bg-[#7594c4] pt-[120px]">
            <div className="flex flex-1 items-center justify-center rounded-t-xs border border-[#8a9cbc] bg-[linear-gradient(90deg,#eef2f8,#c3cfe2)]">
              <svg width="8" height="9" stroke="#5a6b8a"><path d="M0 1.500h8M0 4.500h8M0 7.500h8" /></svg>
            </div>
          </div>
        </div>
      </div>
    </div>
  </section>
);

/* ---------- Drill Tool Manager ---------- */

const heads = ["", "Tool", "Count", "Slot\nLen(my)", "Type", "Finish\nSize(my)", "+Tol\n(my)", "−Tol\n(my)", "Drill\nSize(my)", "Drill\nDes", ""];

const td = "h-[33px] border-r-2 border-b-2 border-black p-0";

const Mark = ({ letter }: { letter: string }) => (
  <svg width="20" height="20" className="mx-auto font-['Liberation_Sans',sans-serif]">
    <rect x="0.500" y="0.500" width="19" height="19" fill="#fff" stroke="#000" />
    <path d="M10.500 5v12M4 11.500h13" stroke="#000" shapeRendering="crispEdges" />
    <text x="14" y="8" fontSize="8">{letter}</text>
  </svg>
);

const ToolTable = () => (
  <div className="mt-px h-[389px] overflow-hidden border-2 border-t-[#27705c] border-l-[#27705c] border-r-[#a4ecd9] border-b-[#a4ecd9] pl-px">
    <table className="w-full table-fixed border-separate border-spacing-0 text-[15px] leading-[15px]">
      <colgroup>
        <col className="w-[28px]" />
        <col className="w-[67px]" />
        <col className="w-[60px]" />
        <col className="w-[84px]" />
        <col />
        <col className="w-[83px]" />
        <col className="w-[74px]" />
        <col className="w-[74px]" />
        <col className="w-[83px]" />
        <col className="w-[83px]" />
        <col className="w-[6px]" />
      </colgroup>
      <thead>
        <tr>
          {heads.map((head, i) => (
            <th key={i} className="h-[38px] border-b-2 border-black p-0 pb-[2px] font-bold">
              <div
                className={clsx(
                  "flex h-[34px] items-center justify-center overflow-hidden border-y border-black bg-[#b3ffff] whitespace-pre",
                  i < 10 && "border-r-2",
                  i === 0 && "border-l-2"
                )}
              >
                {head}
              </div>
            </th>
          ))}
        </tr>
      </thead>
      <tbody>
        {tools.map(([tool, count, type, finish, plus, minus, size], i) => (
          <tr key={tool}>
            <td className={clsx(td, "border-l-2")}>
              <Mark letter={"ABCDEFGHJ"[i]} />
            </td>
            <td className={td}>
              <button
                className={clsx("ml-[2px] block h-[27px] w-[62px] pl-[2px] text-left", raisedGreen, tool === "T08" && "bg-[#fdc64f]")}
              >
                {tool}
              </button>
            </td>
            <td className={clsx(td, "pr-[2px] text-right")}>{count}</td>
            <td className={clsx(td, "bg-white px-[2px]")}>
              <Field label={`${tool} slot length`} bevel={sunkenWhite} className="h-[28px]" />
            </td>
            <td className={clsx(td, "bg-[#ffffcc] pr-[2px] pl-[5px]")}>
              <Picker label={`${tool} type`} value={type} tone={raisedCream} mark={raisedCream} className="h-[28px]" />
            </td>
            {[finish, plus, minus].map((value, j) => (
              <td key={j} className={clsx(td, "bg-[#ffffcc] px-[2px]")}>
                <Field label={`${tool} ${heads[j + 5]}`} value={value} bevel={sunkenCream} className="h-[28px]" />
              </td>
            ))}
            {[size, ""].map((value, j) => (
              <td key={j} className={clsx(td, "bg-white px-[2px]")}>
                <Field label={`${tool} ${heads[j + 8]}`} value={value} bevel={sunkenWhite} className="h-[28px]" />
              </td>
            ))}
            <td className="border-b-2 border-black p-0" />
          </tr>
        ))}
        <tr>
          <td className={clsx(td, "border-l-2")} />
          <td className={td}>
            <button className={clsx("ml-[2px] block h-[27px] w-[62px] pl-[2px] text-left", raisedGreen)}>Total</button>
          </td>
          <td className={clsx(td, "pr-[2px] text-right")}>4594</td>
          {heads.slice(3, 10).map((head) => (
            <td key={head} className={td} />
          ))}
          <td className="border-b-2 border-black p-0" />
        </tr>
      </tbody>
    </table>
  </div>
);

const cell = "border border-black p-[2px] flex";

const DrillToolManager = () => (
  <section className="absolute top-[69px] right-0 w-[775px] rounded-t-lg border border-[#c9d3da] bg-[linear-gradient(#7f99a8_0,#1a2128_24px,#0a0e14_100px,#0a0e14)] pr-[3px] pb-[6px] pl-[6px]">
    <header className="flex h-[29px] items-start justify-between">
      <h2 className={clsx("flex items-center gap-1 pt-[6px] text-[13px] leading-4", cjk)}>
        <XIcon />
        <span className="rounded-full bg-[#7c858c] pr-2 shadow-[0_0_8px_4px_#7c858c]">Drill Tool Manager</span>
      </h2>
      <WindowButtons active />
    </header>
    <div className={clsx("border border-black bg-[#52ceb0] text-[15px] leading-4", mono)}>
      <div className="flex h-[33px]">
        <div className={clsx(cell, "w-[166px]")}>
          <Button className="flex flex-1 items-center justify-between pr-[14px] pl-[2px]">
            <span>Layer</span>
            <span>:</span>
          </Button>
        </div>
        <div className={clsx(cell, "w-[110px] bg-[#9bdbdb]")}>
          <Field label="Layer" value="drl" bevel={sunken} className="flex-1" />
        </div>
        <label className={clsx(cell, "ml-auto w-[187px] items-center justify-between bg-[#9bdbdb] pl-[9px]")}>
          Slots:
          <Picker label="Slots" value="By length" tone={raised} className="h-[27px] w-[115px]" />
        </label>
        <div className="w-[150px]" />
      </div>
      <div className="flex h-[28px] gap-[2px]">
        <div className={clsx(cell, "w-[306px] items-center gap-[6px] bg-[#9bdbdb] pl-[1px]")}>
          <span className="w-[160px] whitespace-nowrap">Board Thickness :</span>
          <Field label="Board Thickness" value="2900" bevel={sunken} className="h-[24px] w-[105px]" />
          my
        </div>
        <div className={clsx(cell, "w-[175px]")}>
          <Button className="flex-1 pl-px text-left">User Parameters :</Button>
        </div>
        <div className={clsx(cell, "ml-auto w-[128px] bg-[#9bdbdb]")}>
          <Field label="User Parameters" value="no_hasl" bevel={sunken} className="flex-1" />
        </div>
        <div className="w-[148px]" />
      </div>
      <ToolTable />
      <div className="mx-px mt-[4px] flex h-4 border-2 border-t-[#27705c] border-l-[#27705c] border-r-[#a4ecd9] border-b-[#a4ecd9] bg-[#45ad94]">
        <svg width="13" height="12" fill="none" strokeWidth="1.500">
          <path d="M12 1L1 6l11 5" stroke="#a4ecd9" />
          <path d="M12 1v10" stroke="#27705c" />
        </svg>
        <div className={clsx("mr-[64px] flex-1 bg-[#52ceb0]", raisedGreen)} />
        <svg width="13" height="12" fill="none" strokeWidth="1.500">
          <path d="M1 1l11 5L1 11z" stroke="#a4ecd9" />
        </svg>
      </div>
      <div className="mt-[5px] flex h-[34px] border border-black">
        <div className="mr-[2px] flex w-[39px] items-center border-r border-black bg-[#fdc64f] pl-[3px] text-xs">T08</div>
        <div className={clsx(cell, "w-[60px]")}>
          <Button className="flex-1">First</Button>
        </div>
        <div className={clsx(cell, "w-[35px]")}>
          <Button className="flex-1">&lt;--</Button>
        </div>
        <div className={clsx(cell, "w-[35px]")}>
          <Button className="flex-1">--&gt;</Button>
        </div>
        <div className={clsx(cell, "w-[49px]")}>
          <Button className="flex-1">Last</Button>
        </div>
        <label className="flex items-center gap-[5px] pl-[3px]">
          Index:
          <span className={clsx("flex h-[29px] w-[59px] items-start pt-px pl-[2px]", sunken)}>
            <IBeam solid />
            <input className="h-4 w-full min-w-0 bg-transparent outline-none" />
          </span>
        </label>
        <div className="ml-1 flex w-[30px] border-[3px] border-black">
          <Button className="flex flex-1 items-center justify-center">
            <svg width="17" height="18" fill="none" stroke="#000">
              <path d="M0.500 0.500h16v16H0.500z" />
              <path d="M7 12C4 9 4 4 8.500 3.500S13 9 10 12v3H7z" />
            </svg>
          </Button>
        </div>
        <div className={clsx(cell, "w-[30px]")}>
          <Button className="flex flex-1 items-center justify-center">
            <svg width="17" height="18" fill="none" stroke="#222">
              <path d="M0.500 0.500h16v16H0.500z" />
              <path d="M3 3h2l1 1h7L9 7l4 5-1 2-2-1-2 2-2-2-2 2" />
            </svg>
          </Button>
        </div>
        <div className={clsx(cell, "w-[29px]")}>
          <Button className="flex flex-1 items-center justify-center">
            <svg width="17" height="18" fill="none" stroke="#222">
              <path d="M0.500 0.500h16v16H0.500z" />
              <path d="M5 12C3 8 5 4 8.500 4S14 8 12 12zM7 11v4M10 11v4" />
              <path d="M2 2l13 13M15 2L2 15" stroke="#dd1d1d" strokeWidth="2" />
            </svg>
          </Button>
        </div>
        <div className={clsx(cell, "ml-auto w-[88px] bg-[#9bdbdb] pl-[5px]")}>
          <Picker label="Display units" value="ml/my" tone={raised} className="flex-1" />
        </div>
        <div className={clsx(cell, "w-[114px] bg-[#9bdbdb] pl-[5px]")}>
          <Picker label="Mode" value="Regular" tone={raised} className="flex-1" />
        </div>
      </div>
      <div className="mt-[4px] flex h-[34px] border border-black">
        <div className={clsx(cell, "ml-auto w-[131px]")}>
          <Button className="flex-1">Combine Tools</Button>
        </div>
        <label className={clsx(cell, "w-[360px] items-center justify-between bg-[#9bdbdb] pl-[10px]")}>
          Merge Tools :
          <Picker label="Merge Tools" value="Update Tools Numbers" tone={raised} className="h-[28px] w-[213px]" />
        </label>
        <div className={clsx(cell, "w-[56px]")}>
          <Button className="flex-1">Merge</Button>
        </div>
      </div>
      <div className="grid h-[29px] grid-cols-4">
        {["Apply", "Calc Drills", "Update Table", "Close"].map((name) => (
          <div key={name} className={cell}>
            <Button className="flex-1">{name}</Button>
          </div>
        ))}
      </div>
    </div>
  </section>
);

/* ---------- desktop helpers ---------- */

const InputBar = () => (
  <div className="absolute right-0 bottom-0 flex h-5 w-[180px] items-center justify-between bg-white pr-[3px] pl-[6px] text-[#2a74c0]">
    <svg width="30" height="26" viewBox="0 0 30 26" className="absolute bottom-0 left-[-28px]">
      <path d="M1 4l23-4 5 22-23 4z" fill="#f0581c" />
      <path d="M21 6C15 3 9 6 10 10s10 3 10 7-7 4-12 1" fill="none" stroke="#fff" strokeWidth="4" />
    </svg>
    <span className={clsx("text-sm font-bold", cjk)}>英</span>
    <b>，</b>
    <Smile size={15} strokeWidth={3} />
    <Mic size={15} strokeWidth={3} />
    <Keyboard size={17} strokeWidth={3} />
    <User size={15} strokeWidth={3} className="text-[#a9b4c8]" fill="currentColor" />
    <Shirt size={15} fill="currentColor" />
    <Wrench size={15} fill="currentColor" />
  </div>
);

const SpeedMeter = () => (
  <div className="absolute right-[47px] bottom-[9px] flex items-center">
    <div className="z-10 flex size-[47px] items-center justify-center rounded-full border-2 border-[#e4e4e4] bg-[linear-gradient(#2c7d46_25%,#4fcb5e_26%,#3dbb50)] font-['Liberation_Sans',sans-serif] text-[15px] text-white">
      78%
    </div>
    <div className="-ml-5 flex h-[39px] w-[100px] items-center justify-between rounded-r-full bg-[linear-gradient(#f6f6f6,#d3d3d3)] pr-2 pl-7 text-right font-['Liberation_Sans',sans-serif] text-[11px] leading-[15px] text-[#222] shadow">
      <span className="text-left font-bold">
        <span className="block text-[#e2502e]">↑</span>
        <span className="block text-[#1f9a50]">↓</span>
      </span>
      <span>
        2.7K/s
        <br />
        0K/s
      </span>
      <span className="relative flex size-4 items-center justify-center rounded-full bg-[#3b7fd0] text-sm font-bold text-white">
        +
        <span className="absolute -top-1 -right-1 size-2 rounded-full bg-[#d83a3a]" />
      </span>
    </div>
  </div>
);

const App = () => {
  return (
    <div className="relative h-screen overflow-hidden bg-black">
      <GraphicEditor />
      <Excel />
      <DrillToolManager />
      <InputBar />
      <SpeedMeter />
    </div>
  );
};

export default App;
